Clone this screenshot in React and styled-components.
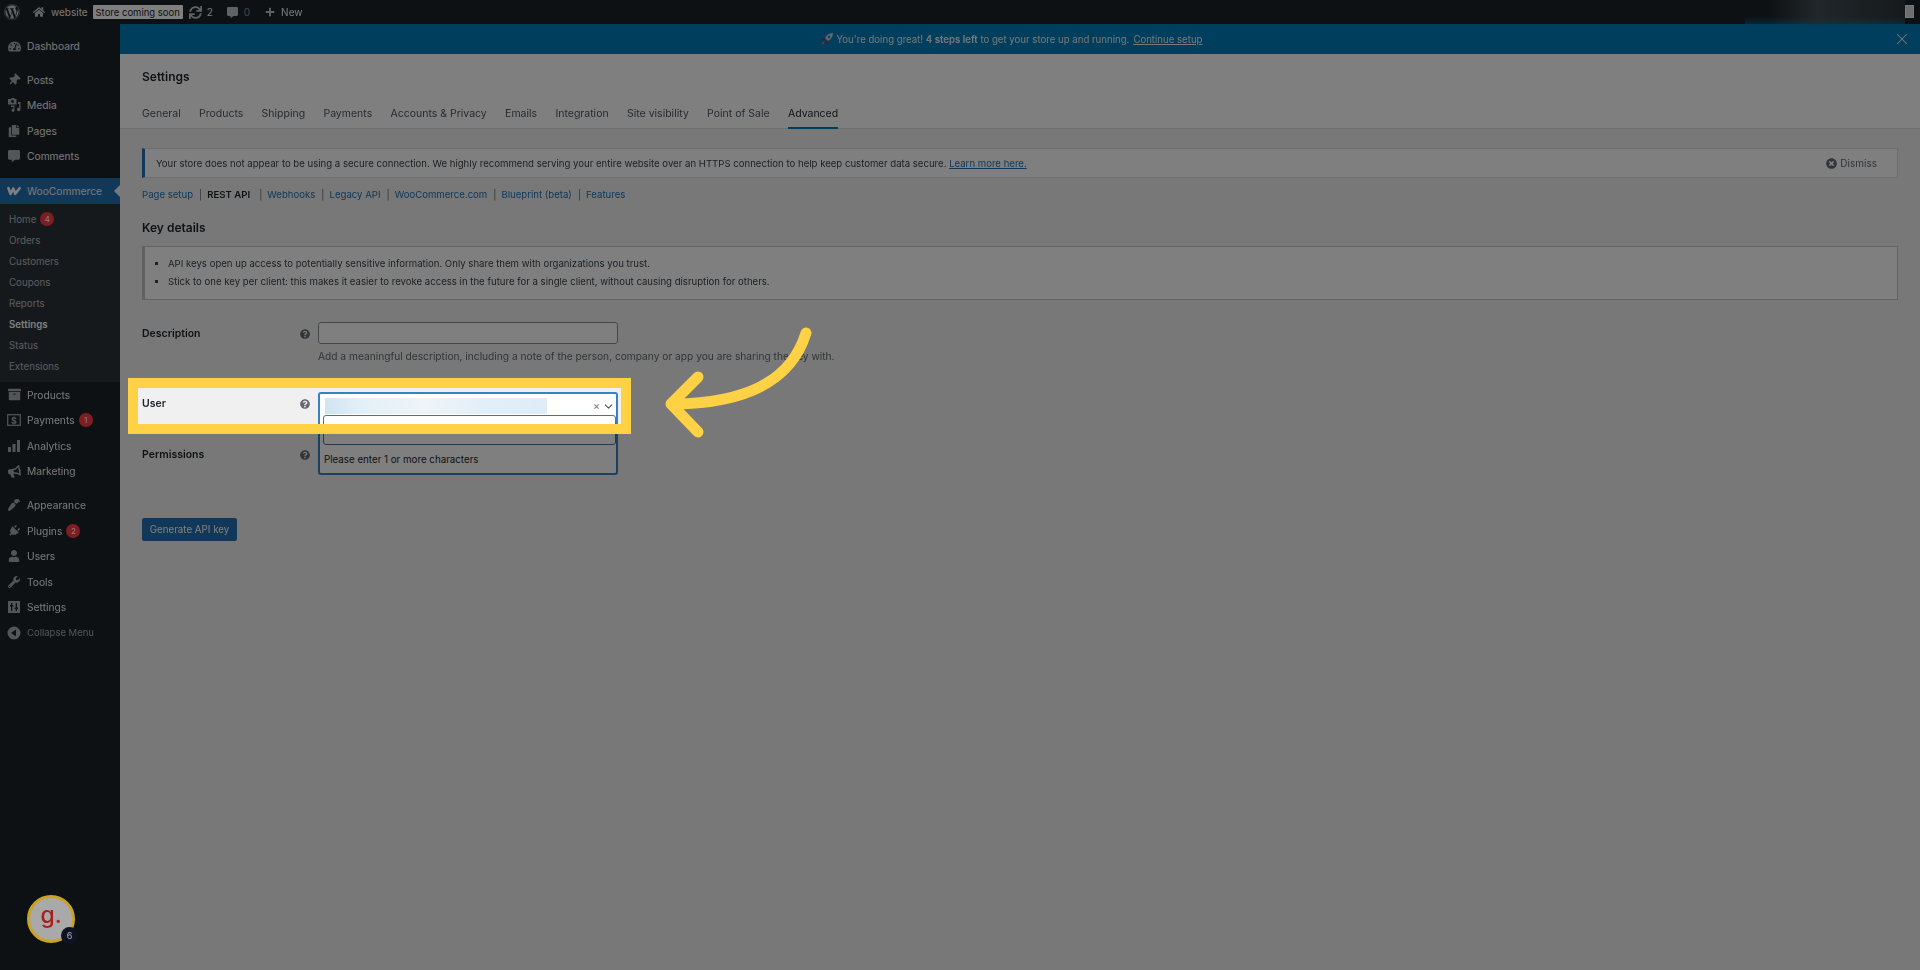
import React from 'react';
import styled, { createGlobalStyle } from 'styled-components';
import {
  FaWordpress, FaHome, FaSync, FaCommentAlt, FaPlus, FaTachometerAlt, FaThumbtack, FaCopy,
  FaArchive, FaBullhorn, FaPaintBrush, FaPlug, FaUser, FaWrench, FaQuestionCircle, FaTimesCircle,
} from 'react-icons/fa';
import { X, ChevronDown } from 'lucide-react';

const GlobalStyle = createGlobalStyle`
  html, body { margin: 0; padding: 0; background: #f0f0f1; }
  body { font-family: Inter, "Liberation Sans", sans-serif; font-size: 10.5px; color: #3c434a; }
  * { box-sizing: border-box; }
`;

const Page = styled.div`
  position: relative;
  width: 1920px;
  height: 970px;
  overflow: hidden;
  filter: blur(0.4px);
`;

const TopBar = styled.div`
  height: 24px;
  background: #1d2327;
  color: #f0f0f1;
  display: flex;
  align-items: center;
  padding-left: 4px;
  font-size: 10px;
`;

const BarItem = styled.span`
  display: inline-flex;
  align-items: center;
  gap: ${(p) => p.$gap ?? 6}px;
  margin-right: ${(p) => p.$mr ?? 0}px;
  color: ${(p) => p.$faded ? '#8c8f94' : 'inherit'};
  svg { color: #c3c4c7; flex: none; }
`;

const Badge = styled.span`
  height: 14px;
  width: 90px;
  background: #fff;
  color: #1d2327;
  border-radius: 1px;
  font-size: 9.5px;
  white-space: nowrap;
  display: flex;
  align-items: center;
  justify-content: center;
  margin-right: 6px;
`;

const Redacted = styled.div`
  position: absolute;
  top: 0;
  left: 1745px;
  width: 160px;
  height: 33px;
  background:
    linear-gradient(90deg, rgba(70, 84, 90, 0) 15%, rgba(80, 96, 102, 0.7) 45%, rgba(70, 84, 90, 0.35) 100%),
    linear-gradient(180deg, #1d2327 0, #1d2327 50%, #017bb4 100%);
`;

const Avatar = styled.div`
  position: absolute;
  top: 5px;
  left: 1905px;
  width: 9px;
  height: 13px;
  background: #dcdcde;
  border: 1px solid #f0f0f1;
`;

const Body = styled.div`
  display: flex;
  height: 946px;
`;

const Sidebar = styled.nav`
  position: relative;
  width: 120px;
  flex: none;
  background: #1d2327;
  color: #f0f0f1;
  padding-top: 9.5px;
`;

const MenuItem = styled.div`
  position: relative;
  height: 25.5px;
  margin-top: ${(p) => p.$gap ?? 0}px;
  padding-left: 7px;
  display: flex;
  align-items: center;
  font-size: ${(p) => p.$muted ? 9.5 : 10.25}px;
  background: ${(p) => p.$active ? '#2271b1' : 'transparent'};
  color: ${(p) => p.$muted ? '#a7aaad' : '#f0f0f1'};
  ${(p) => p.$active && `
    &::after {
      content: '';
      position: absolute;
      right: 0;
      top: 7px;
      border: 6px solid transparent;
      border-right-color: #f0f0f1;
      border-left: 0;
    }
  `}
`;

const MenuIcon = styled.span`
  width: 14px;
  height: 14px;
  margin-right: 6px;
  display: inline-flex;
  align-items: center;
  justify-content: center;
  color: ${(p) => p.$bright ? '#fff' : '#a7aaad'};
  flex: none;
  svg { transform: rotate(${(p) => p.$turn ?? 0}deg); }
`;

const SubMenu = styled.div`
  background: #2c3338;
  padding: 5px 0 5.5px;
`;

const SubItem = styled.div`
  height: 21px;
  padding-left: 9px;
  display: flex;
  align-items: center;
  font-size: 9.75px;
  font-weight: ${(p) => p.$current ? 600 : 400};
  color: ${(p) => p.$current ? '#fff' : 'rgba(240, 246, 252, 0.7)'};
`;

const Count = styled.span`
  width: 14px;
  height: 14px;
  margin-left: 4px;
  border-radius: 50%;
  background: #ff3a44;
  color: #fff;
  font-size: 8px;
  display: inline-flex;
  align-items: center;
  justify-content: center;
`;

const Widget = styled.div`
  position: absolute;
  left: 27px;
  top: 871px;
  width: 48px;
  height: 48px;
  border-radius: 50%;
  border: 3px solid #c9a327;
  background: #a9a9a9;
  color: #a81f1f;
  font-size: 23px;
  font-weight: 500;
  line-height: 35px;
  text-align: center;
  z-index: 6;
`;

const WidgetCount = styled.span`
  position: absolute;
  right: -6px;
  bottom: -4px;
  width: 17px;
  height: 17px;
  border-radius: 50%;
  background: #0d1322;
  color: #b5b5b5;
  font-size: 9px;
  font-weight: 400;
  line-height: 17px;
`;

const Content = styled.main`
  flex: 1;
  min-width: 0;
  display: flex;
  flex-direction: column;
`;

const Banner = styled.div`
  position: relative;
  height: 30px;
  background: #007cba;
  color: #f0f0f1;
  display: flex;
  align-items: center;
  justify-content: center;
  gap: 3px;
  padding-right: 18px;
  font-size: 9.65px;
  a { color: inherit; text-decoration: underline; margin-left: 1px; }
  b { font-weight: 600; }
`;

const BannerClose = styled.span`
  position: absolute;
  right: 9px;
  top: 6px;
  display: flex;
  color: #f0f0f1;
`;

const Header = styled.header`
  height: 75px;
  background: #fff;
  padding: 14px 22px 0;
  border-bottom: 1px solid #dcdcde;
`;

const Title = styled.h1`
  margin: 0;
  height: 17px;
  line-height: 17px;
  font-size: 12px;
  font-weight: 600;
  color: #1d2327;
`;

const Tabs = styled.div`
  display: flex;
  gap: 18.3px;
  margin-top: 20px;
`;

const Tab = styled.span`
  height: 24px;
  line-height: 15px;
  padding-top: 1px;
  color: ${(p) => p.$active ? '#1d2327' : '#50575e'};
  border-bottom: 2px solid ${(p) => p.$active ? '#007cba' : 'transparent'};
`;

const Main = styled.div`
  padding: 19px 22px 0;
  flex: 1;
`;

const Notice = styled.div`
  height: 30px;
  background: #fff;
  border: 1px solid #dcdcde;
  border-left: 3px solid #2271b1;
  display: flex;
  align-items: center;
  justify-content: space-between;
  padding: 0 20px 0 11px;
  font-size: 9.6px;
  a { color: #2271b1; text-decoration: underline; }
`;

const Dismiss = styled.span`
  display: flex;
  align-items: center;
  gap: 3px;
  font-size: 10px;
  color: #646970;
`;

const SubNav = styled.div`
  display: flex;
  margin-top: 8px;
  height: 16px;
  align-items: center;
  font-size: 9.6px;
`;

const SubLink = styled.span`
  color: ${(p) => p.$current ? '#1d2327' : '#2271b1'};
  font-weight: ${(p) => p.$current ? 600 : 400};
  &::after {
    content: '|';
    color: #646970;
    font-weight: 400;
    margin: 0 5px 0 ${(p) => p.$current ? 9 : 6}px;
  }
  &:last-child::after { content: none; }
`;

const SectionTitle = styled.h2`
  margin: 17px 0 0;
  height: 18px;
  line-height: 18px;
  font-size: 12px;
  font-weight: 600;
  color: #1d2327;
`;

const InfoBox = styled.ul`
  margin: 9px 0 0;
  height: 54px;
  padding: 8px 0 0 23px;
  background: #fff;
  border: 1px solid #c3c4c7;
  border-left: 3px solid #c3c4c7;
  list-style: square;
  font-size: 9.6px;
  li { height: 18px; line-height: 18px; }
`;

const Form = styled.div`
  margin-top: 22px;
  width: 900px;
`;

const Row = styled.div`
  display: grid;
  grid-template-columns: 176px 1fr;
  height: ${(p) => p.$h}px;
`;

const Label = styled.label`
  display: flex;
  align-items: flex-start;
  justify-content: space-between;
  padding: 4px 8px 0 0;
  font-weight: 600;
  color: #1d2327;
  line-height: 16px;
  svg { color: #646970; margin-top: 3px; }
`;

const TextInput = styled.div`
  width: 300px;
  height: 22px;
  background: #fff;
  border: 1px solid #8c8f94;
  border-radius: 3px;
`;

const Hint = styled.p`
  margin: 4px 0 0;
  line-height: 16px;
  font-size: 10.2px;
  color: #646970;
  width: 560px;
`;

const SelectWrap = styled.div`
  position: relative;
`;

const Select = styled.div`
  position: absolute;
  top: 0;
  left: 0;
  width: 300px;
  height: 83px;
  background: #fff;
  border: 2px solid #3582c4;
  border-radius: 3px;
  z-index: 2;
`;

const SelectValue = styled.div`
  height: 21px;
  padding: 3px 1px 0 5px;
  display: flex;
  align-items: center;
  justify-content: space-between;
  color: #50575e;
`;

const Blur = styled.div`
  width: 222px;
  height: 16px;
  background: linear-gradient(90deg, #cfe4f3 0, #e3eff8 15%, #edf4fa 45%, #e3eff8 70%, #dfebf6 100%);
  filter: blur(0.5px);
`;

const Clear = styled.span`
  display: flex;
  align-items: center;
  gap: 2px;
  font-size: 11px;
  color: #787c82;
  svg { color: #50575e; }
`;

const SearchBox = styled.div`
  margin: 0 0 0 3px;
  width: 293px;
  height: 30px;
  background: #fff;
  border: 1px solid #50708c;
  border-radius: 3px;
  padding: 11px 0 0 4px;
  &::after {
    content: '';
    display: block;
    width: 1px;
    height: 7px;
    background: #1d2327;
  }
`;

const SearchMessage = styled.div`
  padding: 8px 0 0 4px;
  line-height: 14px;
  font-size: 9.75px;
  color: #1d2327;
`;

const GenerateButton = styled.button`
  display: block;
  width: 95px;
  height: 23px;
  padding: 0;
  border: 1px solid #2271b1;
  border-radius: 2px;
  background: #2271b1;
  color: #fff;
  font: inherit;
  font-size: 9.75px;
`;

const Spotlight = styled.div`
  position: absolute;
  left: 128px;
  top: 378px;
  width: 503px;
  height: 56px;
  border: 10px solid #ffd145;
  box-shadow: 0 0 0 3000px rgba(0, 0, 0, 0.5);
  z-index: 5;
  pointer-events: none;
`;

const Arrow = styled.svg`
  position: absolute;
  left: 660px;
  top: 320px;
  z-index: 6;
`;

const WooIcon = () => (
  <svg width="15" height="14" viewBox="0 0 15 14" fill="none" stroke="currentColor" strokeWidth="2.800" strokeLinejoin="round" strokeLinecap="round">
    <path d="M1.500 4 3.800 10 6.800 4.500 8.800 10 13.500 4" />
  </svg>
);

const MediaIcon = () => (
  <svg width="14" height="14" viewBox="0 0 14 14" fill="currentColor">
    <path d="M1 1h3l.7-1h2.600l.7 1h1.500v5.500H1z" />
    <circle cx="5.500" cy="3.500" r="1.400" fill="#1d2327" />
    <path d="M11 4h2.500v7.500a1.800 1.800 0 1 1-1.200-1.700V6H11zM4 7.500h3.500v4.700a1.500 1.500 0 1 1-1-1.400V9H4z" />
  </svg>
);

const MoneyIcon = () => (
  <svg width="14" height="14" viewBox="0 0 14 14" fill="none" stroke="currentColor">
    <rect x="0.700" y="1.700" width="12.600" height="10.600" strokeWidth="1.200" />
    <text x="7" y="10.500" textAnchor="middle" fontSize="9" fontWeight="700" fill="currentColor" stroke="none">$</text>
  </svg>
);

const BarsIcon = () => (
  <svg width="14" height="14" viewBox="0 0 14 14" fill="currentColor">
    <rect x="1" y="8" width="3" height="5" />
    <rect x="5.500" y="5" width="3" height="8" />
    <rect x="10" y="1" width="3" height="12" />
  </svg>
);

const SlidersIcon = () => (
  <svg width="14" height="14" viewBox="0 0 14 14" fill="currentColor">
    <path d="M1 1h12v12H1zM4 3v2H3v1.500h1V11h1.300V6.500h1V5h-1V3zM8.700 3v4.500h-1V9h1v2H10V9h1V7.500h-1V3z" fillRule="evenodd" />
  </svg>
);

const CollapseIcon = () => (
  <svg width="14" height="14" viewBox="0 0 14 14" fill="currentColor">
    <path d="M7 .5a6.500 6.500 0 1 1 0 13 6.500 6.500 0 0 1 0-13zM9 3.500 4 7l5 3.500z" fillRule="evenodd" />
  </svg>
);

const RocketIcon = () => (
  <svg width="14" height="14" viewBox="0 0 14 14">
    <path d="M13 1c-3.500 0-6 1.500-8 5l3 3c3.500-2 5-4.500 5-8z" fill="#c9ccd1" />
    <circle cx="9" cy="5" r="1.200" fill="#2a6fb0" />
    <path d="M5 6 2.500 6.500 1.500 8.500 4.500 8zM8 9l-.5 2.500-2 1L6 9.500z" fill="#b3261e" />
    <path d="M4 9.500C2.800 10 2 11 1.500 12.500 3 12 4 11.200 4.500 10z" fill="#f09a1a" />
  </svg>
);

const topMenu = [
  { label: 'Dashboard', icon: <FaTachometerAlt size={13} /> },
  { label: 'Posts', icon: <FaThumbtack size={12} />, turn: 45, gap: 8 },
  { label: 'Media', icon: <MediaIcon /> },
  { label: 'Pages', icon: <FaCopy size={12} /> },
  { label: 'Comments', icon: <FaCommentAlt size={12} /> },
];

const subMenu = [
  { label: 'Home', count: 4 },
  { label: 'Orders' },
  { label: 'Customers' },
  { label: 'Coupons' },
  { label: 'Reports' },
  { label: 'Settings', current: true },
  { label: 'Status' },
  { label: 'Extensions' },
];

const bottomMenu = [
  { label: 'Products', icon: <FaArchive size={13} /> },
  { label: 'Payments', icon: <MoneyIcon />, count: 1 },
  { label: 'Analytics', icon: <BarsIcon /> },
  { label: 'Marketing', icon: <FaBullhorn size={13} />, turn: -10 },
  { label: 'Appearance', icon: <FaPaintBrush size={12} />, turn: 180, gap: 8.5 },
  { label: 'Plugins', icon: <FaPlug size={12} />, turn: 45, count: 2 },
  { label: 'Users', icon: <FaUser size={12} /> },
  { label: 'Tools', icon: <FaWrench size={12} /> },
  { label: 'Settings', icon: <SlidersIcon /> },
  { label: 'Collapse Menu', icon: <CollapseIcon />, muted: true },
];

const tabs = ['General', 'Products', 'Shipping', 'Payments', 'Accounts & Privacy', 'Emails', 'Integration', 'Site visibility', 'Point of Sale', 'Advanced'];
const subLinks = ['Page setup', 'REST API', 'Webhooks', 'Legacy API', 'WooCommerce.com', 'Blueprint (beta)', 'Features'];

function Menu({ items }) {
  return items.map((item) => (
    <MenuItem key={item.label} $gap={item.gap} $muted={item.muted}>
      <MenuIcon $turn={item.turn}>{item.icon}</MenuIcon>
      {item.label}
      {item.count && <Count>{item.count}</Count>}
    </MenuItem>
  ));
}

export default function App() {
  return (
    <Page>
      <GlobalStyle />
      <TopBar>
        <BarItem $mr={13}><FaWordpress size={16} /></BarItem>
        <BarItem $mr={5}><FaHome size={12} />website</BarItem>
        <Badge>Store coming soon</Badge>
        <BarItem $mr={14} $gap={5}><FaSync size={13} />2</BarItem>
        <BarItem $mr={15} $faded><FaCommentAlt size={11} />0</BarItem>
        <BarItem><FaPlus size={10} />New</BarItem>
      </TopBar>
      <Redacted />
      <Avatar />
      <Body>
        <Sidebar>
          <Menu items={topMenu} />
          <MenuItem $gap={9} $active>
            <MenuIcon $bright><WooIcon /></MenuIcon>
            WooCommerce
          </MenuItem>
          <SubMenu>
            {subMenu.map((item) => (
              <SubItem key={item.label} $current={item.current}>
                {item.label}
                {item.count && <Count>{item.count}</Count>}
              </SubItem>
            ))}
          </SubMenu>
          <Menu items={bottomMenu} />
          <Widget>
            g.
            <WidgetCount>6</WidgetCount>
          </Widget>
        </Sidebar>
        <Content>
          <Banner>
            <RocketIcon />
            <span>You're doing great! <b>4 steps left</b> to get your store up and running.</span>
            <a>Continue setup</a>
            <BannerClose><X size={18} strokeWidth={1.4} /></BannerClose>
          </Banner>
          <Header>
            <Title>Settings</Title>
            <Tabs>
              {tabs.map((t) => <Tab key={t} $active={t === 'Advanced'}>{t}</Tab>)}
            </Tabs>
          </Header>
          <Main>
            <Notice>
              <span>Your store does not appear to be using a secure connection. We highly recommend serving your entire website over an HTTPS connection to help keep customer data secure. <a>Learn more here.</a></span>
              <Dismiss><FaTimesCircle size={11} />Dismiss</Dismiss>
            </Notice>
            <SubNav>
              {subLinks.map((l) => <SubLink key={l} $current={l === 'REST API'}>{l}</SubLink>)}
            </SubNav>
            <SectionTitle>Key details</SectionTitle>
            <InfoBox>
              <li>API keys open up access to potentially sensitive information. Only share them with organizations you trust.</li>
              <li>Stick to one key per client: this makes it easier to revoke access in the future for a single client, without causing disruption for others.</li>
            </InfoBox>
            <Form>
              <Row $h={70}>
                <Label>Description<FaQuestionCircle size={10} /></Label>
                <div>
                  <TextInput />
                  <Hint>Add a meaningful description, including a note of the person, company or app you are sharing the key with.</Hint>
                </div>
              </Row>
              <Row $h={51}>
                <Label>User<FaQuestionCircle size={10} /></Label>
                <SelectWrap>
                  <Select>
                    <SelectValue>
                      <Blur />
                      <Clear>×<ChevronDown size={13} /></Clear>
                    </SelectValue>
                    <SearchBox />
                    <SearchMessage>Please enter 1 or more characters</SearchMessage>
                  </Select>
                </SelectWrap>
              </Row>
              <Row $h={75}>
                <Label>Permissions<FaQuestionCircle size={10} /></Label>
              </Row>
              <GenerateButton>Generate API key</GenerateButton>
            </Form>
          </Main>
        </Content>
      </Body>
      <Spotlight />
      <Arrow width="160" height="125" viewBox="660 320 160 125" fill="none" stroke="#ffd145" strokeWidth="11" strokeLinecap="round" strokeLinejoin="round">
        <path d="M806 333C790 385 740 403 675 404" />
        <path d="M698 377 671 404 698 432" />
      </Arrow>
    </Page>
  );
}
